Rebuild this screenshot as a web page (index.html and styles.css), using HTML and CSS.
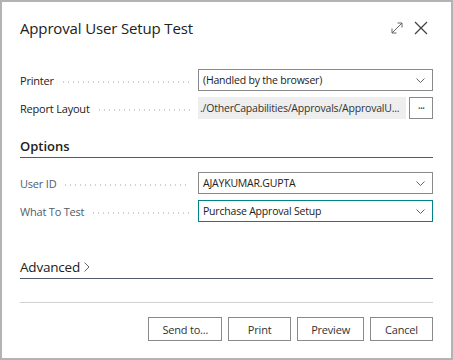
FILE: index.html
```html
<!DOCTYPE html>
<html lang="en">
<head>
  <meta charset="UTF-8">
  <title>Approval User Setup Test</title>
  <link rel="stylesheet" href="styles.css">
</head>
<body>
  <main class="dialog">
    <header class="dialog-head">
      <h1>Approval User Setup Test</h1>
      <div class="head-icons">
        <svg class="icon-expand" width="12" height="12" viewBox="0 0 12 12">
          <path d="M1 11 L11 1 M6.5 1 H11 V5.5 M1 6.5 V11 H5.5" fill="none" stroke="#666" stroke-width="1"/>
        </svg>
        <svg class="icon-close" width="14" height="14" viewBox="0 0 14 14">
          <path d="M1 1 L13 13 M13 1 L1 13" fill="none" stroke="#444" stroke-width="1.3"/>
        </svg>
      </div>
    </header>

    <section class="group first">
      <div class="row">
        <label class="lbl dark"><span>Printer</span></label>
        <div class="field select">
          <span>(Handled by the browser)</span>
          <svg class="chev" width="9" height="5" viewBox="0 0 9 5"><path d="M0.5 0.5 L4.5 4.5 L8.5 0.5" fill="none" stroke="#666" stroke-width="1"/></svg>
        </div>
      </div>
      <div class="row">
        <label class="lbl dark"><span>Report Layout</span></label>
        <div class="field-wrap">
          <div class="field readonly"><span>./OtherCapabilities/Approvals/ApprovalU...</span></div>
          <button type="button" class="more">&middot;&middot;&middot;</button>
        </div>
      </div>
    </section>

    <h2 class="section-title">Options</h2>
    <section class="group">
      <div class="row">
        <label class="lbl"><span>User ID</span></label>
        <div class="field select">
          <span>AJAYKUMAR.GUPTA</span>
          <svg class="chev" width="9" height="5" viewBox="0 0 9 5"><path d="M0.5 0.5 L4.5 4.5 L8.5 0.5" fill="none" stroke="#666" stroke-width="1"/></svg>
        </div>
      </div>
      <div class="row">
        <label class="lbl"><span>What To Test</span></label>
        <div class="field select focus">
          <span>Purchase Approval Setup</span>
          <svg class="chev" width="9" height="5" viewBox="0 0 9 5"><path d="M0.5 0.5 L4.5 4.5 L8.5 0.5" fill="none" stroke="#666" stroke-width="1"/></svg>
        </div>
      </div>
    </section>

    <h2 class="section-title advanced">Advanced
      <svg width="6" height="10" viewBox="0 0 6 10"><path d="M0.5 0.5 L5 5 L0.5 9.5" fill="none" stroke="#666" stroke-width="1"/></svg>
    </h2>

    <footer class="actions">
      <button type="button" class="btn">Send to...</button>
      <button type="button" class="btn">Print</button>
      <button type="button" class="btn">Preview</button>
      <button type="button" class="btn">Cancel</button>
    </footer>
  </main>
</body>
</html>
```

FILE: styles.css
```css
*{
  margin: 0;
  padding: 0;
  box-sizing: border-box;
}
body{
  background-color: #b3b3b3;
  font-family: 'Open Sans', 'Noto Sans', sans-serif;
  color: #212121;
  overflow: hidden;
}
.dialog{
  margin: 2px 2px 0 2px;
  height: 356px;
  background-color: white;
  padding: 0 18px;
  display: flex;
  flex-direction: column;
}
.dialog-head{
  display: flex;
  justify-content: space-between;
  align-items: center;
  height: 50px;
  padding-top: 2px;
}
.dialog-head h1{
  font-size: 15px;
  font-weight: 400;
  letter-spacing: -0.15px;
}
.head-icons{
  display: flex;
  align-items: center;
  gap: 11px;
  margin-right: 5px;
}
.group{
  display: flex;
  flex-direction: column;
  gap: 6px;
}
.group.first{
  margin-top: 17px;
}
.row{
  display: flex;
  align-items: center;
  height: 22px;
}
.lbl{
  width: 178px;
  flex-shrink: 0;
  font-size: 11px;
  letter-spacing: -0.2px;
  color: #505c6d;
  display: flex;
  align-items: center;
  overflow: hidden;
}
.lbl.dark{
  color: #212121;
}
.lbl span{
  white-space: nowrap;
}
.lbl::after{
  content: '';
  flex: 1;
  height: 2px;
  margin: 3px 8px 0 7px;
  background-image: radial-gradient(circle, #cfcfcf 0.8px, transparent 1px);
  background-size: 5px 2px;
}
.field{
  flex: 1;
  min-width: 0;
  height: 22px;
  border: 1px solid #8a8a8a;
  font-size: 10.5px;
  letter-spacing: -0.2px;
  display: flex;
  align-items: center;
  justify-content: space-between;
  padding: 0 7px 0 4px;
  white-space: nowrap;
  overflow: hidden;
}
.field.focus{
  border-color: #008489;
}
.field-wrap{
  flex: 1;
  min-width: 0;
  display: flex;
  gap: 3px;
  height: 22px;
}
.field.readonly{
  border: none;
  background-color: #eeeeee;
  padding-left: 2px;
  color: #333;
}
.more{
  width: 24px;
  flex-shrink: 0;
  height: 22px;
  border: 1px solid #8a8a8a;
  background-color: white;
  font-size: 12px;
  color: #444;
  font-family: inherit;
  letter-spacing: -1px;
}
.section-title{
  font-size: 13px;
  font-weight: 600;
  color: #212121;
  border-bottom: 1px solid #505c6d;
  height: 24px;
  margin-top: 15px;
  margin-bottom: 14px;
  display: flex;
  align-items: center;
}
.section-title.advanced{
  font-size: 13.5px;
  font-weight: 500;
  letter-spacing: -0.2px;
  margin-top: 33px;
  margin-bottom: 0;
  gap: 4px;
}
.actions{
  margin-top: 23px;
  border-top: 1px solid #d0d0d0;
  padding-top: 14px;
  display: flex;
  justify-content: flex-end;
  gap: 6px;
}
.btn{
  height: 24px;
  min-width: 63px;
  padding: 0 13px;
  border: 1px solid #8a8a8a;
  background-color: white;
  font-family: inherit;
  font-size: 11px;
  letter-spacing: -0.2px;
  color: #333;
}
```
